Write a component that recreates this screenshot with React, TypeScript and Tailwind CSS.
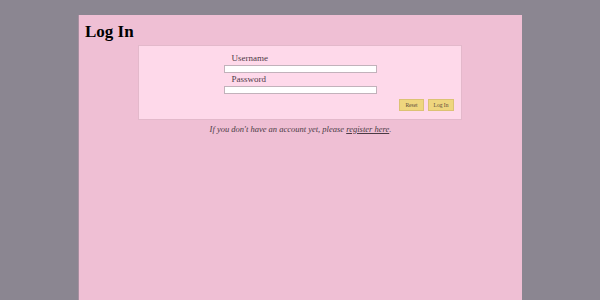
export default function App() {
  return (
    <div className="w-[600px] h-[300px] bg-[#8b8691] flex justify-center overflow-hidden" style={{ fontFamily: '"Liberation Serif", serif' }}>
      <div className="mt-[15px] w-[444px] h-[285px] bg-[#efbfd4] border-l border-[#a88fa0] px-[6px] pt-[7px]">
        <h1 className="text-[17px] leading-[20px] font-bold text-black">Log In</h1>
        <div className="mt-[3px] ml-[53px] w-[324px] h-[75px] bg-[#fed9ea] border border-[#e3b9cb] flex flex-col items-center pt-[7px]">
          <div className="w-[153px] flex flex-col">
            <label className="pl-[8px] text-[9px] leading-[11px] text-[#4e3a47]">Username</label>
            <div className="mt-[1px] h-[8px] bg-white border border-[#c2b2bb]" />
            <label className="mt-[1px] pl-[8px] text-[9px] leading-[11px] text-[#4e3a47]">Password</label>
            <div className="mt-[1px] h-[8px] bg-white border border-[#c2b2bb]" />
          </div>
          <div className="w-full flex justify-end gap-[4px] pr-[7px] mt-[5px]">
            <div className="w-[25px] h-[12px] bg-[#efd67e] border border-[#dcc274] text-[5.5px] leading-[10px] text-center text-[#5b4a3a]">Reset</div>
            <div className="w-[26px] h-[12px] bg-[#efd67e] border border-[#dcc274] text-[5.5px] leading-[10px] text-center text-[#5b4a3a]">Log In</div>
          </div>
        </div>
        <p className="mt-[3px] text-center italic text-[8.5px] leading-[12px] text-[#4a3a44]">
          If you don't have an account yet, please <span className="underline">register here</span>.
        </p>
      </div>
    </div>
  );
}
